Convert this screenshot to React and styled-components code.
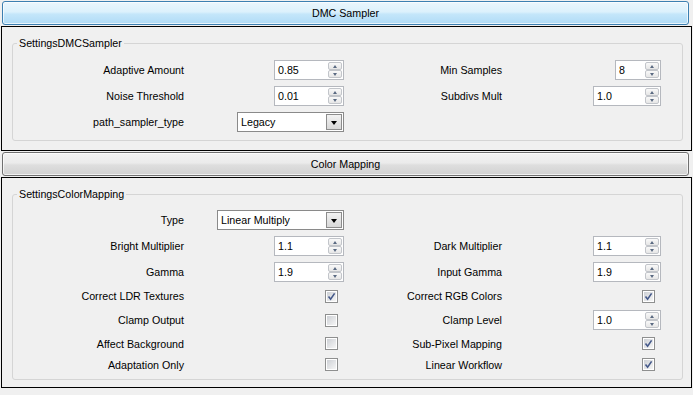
import React from 'react';
import styled, { createGlobalStyle } from 'styled-components';

const GlobalStyle = createGlobalStyle`
  html, body {
    margin: 0;
    padding: 0;
    background: #f0f0f0;
  }
  body {
    font-family: "Liberation Sans", Arial, sans-serif;
    font-size: 10.7px;
    color: #000;
  }
`;

const Page = styled.div`
  width: 693px;
  height: 395px;
  overflow: hidden;
  padding-top: 1px;
  box-sizing: border-box;
`;

const Header = styled.div`
  box-sizing: border-box;
  height: 24px;
  margin: ${(p) => p.$mt || 0}px 4px 0 2px;
  display: flex;
  align-items: center;
  justify-content: center;
  border-radius: 3px;
  border: 1px solid ${(p) => (p.$active ? '#3c7fb1' : '#707070')};
  box-shadow: inset 0 0 0 1px rgba(255, 255, 255, 0.7);
  background: ${(p) =>
    p.$active
      ? 'linear-gradient(#eaf6fd 0%, #dcf1fc 45%, #c4e6fa 55%, #b0dbf6 100%)'
      : 'linear-gradient(#f3f3f3 0%, #ebebeb 45%, #dedede 55%, #d2d2d2 100%)'};
`;

const Panel = styled.div`
  box-sizing: border-box;
  margin: 1px 1px 0 1px;
  border: 1px solid #000;
  padding: 9px 8px ${(p) => p.$pb}px 10px;
`;

const Group = styled.fieldset`
  margin: 0;
  min-width: 0;
  padding: ${(p) => p.$pt}px 0 ${(p) => p.$pb}px 0;
  border: 1px solid #d5d5d5;
  border-radius: 3px;
`;

const Title = styled.legend`
  margin-left: 4px;
  padding: 0 2px;
  line-height: 14px;
`;

const Grid = styled.div`
  display: grid;
  grid-template-columns: 171px 160px 158px 159px;
  grid-template-rows: ${(p) => p.$rows};
  row-gap: 6px;
  align-items: center;
`;

const Label = styled.div`
  text-align: right;
  white-space: nowrap;
`;

const Cell = styled.div`
  display: flex;
  justify-content: flex-end;
  align-items: center;
`;

const Field = styled.div`
  box-sizing: border-box;
  width: ${(p) => p.$w}px;
  height: 20px;
  display: flex;
  align-items: center;
  background: #fff;
  border: 1px solid ${(p) => (p.$combo ? '#8a8a8a' : '#b5b8be')};
  padding-left: 3px;
`;

const Value = styled.span`
  flex: 1;
  white-space: nowrap;
`;

const Arrows = styled.div`
  width: 14px;
  height: 16px;
  margin-right: 1px;
  display: flex;
  flex-direction: column;
`;

const ArrowBtn = styled.div`
  box-sizing: border-box;
  flex: 1;
  display: flex;
  align-items: center;
  justify-content: center;
  border: 1px solid #c2c5ca;
  border-radius: 2px;
  background: linear-gradient(#f9f9f9, #e6e6e6);
  &::after {
    content: '';
    border-left: 2.5px solid transparent;
    border-right: 2.5px solid transparent;
    ${(p) => (p.$down ? 'border-top: 3px solid #5a6a82;' : 'border-bottom: 3px solid #5a6a82;')}
  }
`;

const DropBtn = styled.div`
  box-sizing: border-box;
  width: 16px;
  height: 16px;
  margin-right: 1px;
  display: flex;
  align-items: center;
  justify-content: center;
  border: 1px solid #8c8c8c;
  background: linear-gradient(#f2f2f2, #d8d8d8);
  &::after {
    content: '';
    margin-top: 1px;
    border-left: 3.5px solid transparent;
    border-right: 3.5px solid transparent;
    border-top: 4px solid #000;
  }
`;

const Box = styled.div`
  box-sizing: border-box;
  width: 13px;
  height: 13px;
  margin-right: 6px;
  border: 1px solid #8e8f8f;
  padding: 1px;
  background: #fff;
`;

const BoxInner = styled.div`
  width: 9px;
  height: 9px;
  background: linear-gradient(135deg, #cdd0d5, #f6f6f6);
  display: flex;
`;

function Spin({ w, value }) {
  return (
    <Field $w={w}>
      <Value>{value}</Value>
      <Arrows>
        <ArrowBtn />
        <ArrowBtn $down />
      </Arrows>
    </Field>
  );
}

function Combo({ w, value }) {
  return (
    <Field $w={w} $combo>
      <Value>{value}</Value>
      <DropBtn />
    </Field>
  );
}

function Check({ on }) {
  return (
    <Box>
      <BoxInner>
        {on && (
          <svg width="9" height="9" viewBox="0 0 9 9">
            <path d="M1.5 4.5 L3.6 7.2 L7.6 1.4" fill="none" stroke="#45598a" strokeWidth="1.6" />
          </svg>
        )}
      </BoxInner>
    </Box>
  );
}

function Control({ c }) {
  if (!c) return <Cell />;
  if (c.t === 'spin') return <Cell><Spin w={c.w} value={c.v} /></Cell>;
  if (c.t === 'combo') return <Cell><Combo w={c.w} value={c.v} /></Cell>;
  return <Cell><Check on={c.on} /></Cell>;
}

const dmcRows = [
  ['Adaptive Amount', { t: 'spin', w: 70, v: '0.85' }, 'Min Samples', { t: 'spin', w: 46, v: '8' }],
  ['Noise Threshold', { t: 'spin', w: 70, v: '0.01' }, 'Subdivs Mult', { t: 'spin', w: 68, v: '1.0' }],
  ['path_sampler_type', { t: 'combo', w: 107, v: 'Legacy' }, '', null],
];

const cmRows = [
  ['Type', { t: 'combo', w: 127, v: 'Linear Multiply' }, '', null],
  ['Bright Multiplier', { t: 'spin', w: 70, v: '1.1' }, 'Dark Multiplier', { t: 'spin', w: 68, v: '1.1' }],
  ['Gamma', { t: 'spin', w: 70, v: '1.9' }, 'Input Gamma', { t: 'spin', w: 68, v: '1.9' }],
  ['Correct LDR Textures', { t: 'check', on: true }, 'Correct RGB Colors', { t: 'check', on: true }],
  ['Clamp Output', { t: 'check', on: false }, 'Clamp Level', { t: 'spin', w: 68, v: '1.0' }],
  ['Affect Background', { t: 'check', on: false }, 'Sub-Pixel Mapping', { t: 'check', on: true }],
  ['Adaptation Only', { t: 'check', on: false }, 'Linear Workflow', { t: 'check', on: true }],
];

function Rows({ rows }) {
  return rows.map(([l1, c1, l2, c2]) => (
    <React.Fragment key={l1}>
      <Label>{l1}</Label>
      <Control c={c1} />
      <Label>{l2}</Label>
      <Control c={c2} />
    </React.Fragment>
  ));
}

export default function App() {
  return (
    <Page>
      <GlobalStyle />
      <Header $active>DMC Sampler</Header>
      <Panel $pb={9}>
        <Group $pt={10} $pb={8}>
          <Title>SettingsDMCSampler</Title>
          <Grid $rows="20px 20px 20px">
            <Rows rows={dmcRows} />
          </Grid>
        </Group>
      </Panel>
      <Header $mt={1}>Color Mapping</Header>
      <Panel $pb={7}>
        <Group $pt={9} $pb={7}>
          <Title>SettingsColorMapping</Title>
          <Grid $rows="20px 20px 20px 16px 20px 15px 15px">
            <Rows rows={cmRows} />
          </Grid>
        </Group>
      </Panel>
    </Page>
  );
}
